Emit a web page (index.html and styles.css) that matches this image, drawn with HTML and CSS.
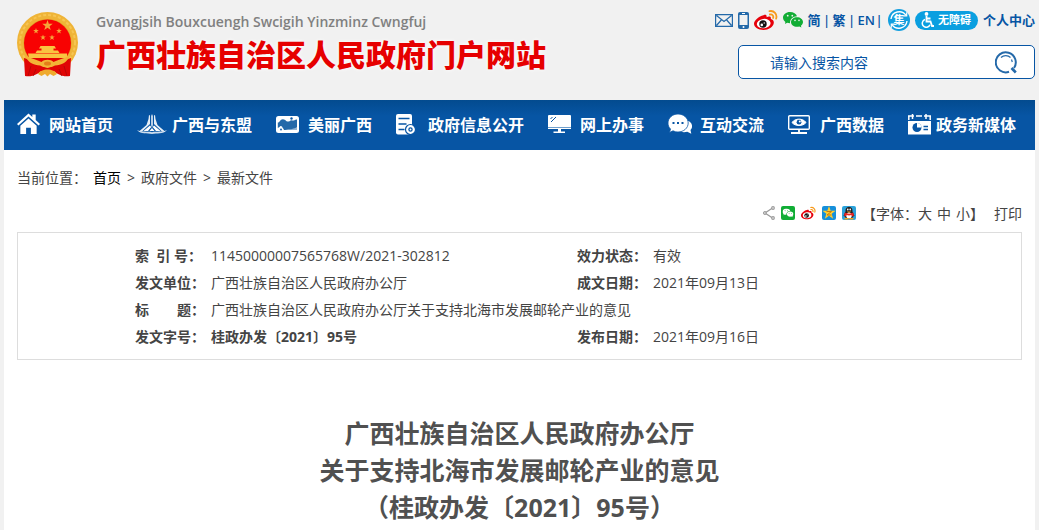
FILE: index.html
```html
<!DOCTYPE html>
<html lang="zh-CN">

<head>
    <meta charset="UTF-8">
    <meta name="viewport" content="width=device-width, initial-scale=1.0">
    <title>广西壮族自治区人民政府门户网站</title>
    <link rel="stylesheet" href="styles.css">
</head>

<body>
    <svg class="defs" width="0" height="0" aria-hidden="true">
        <symbol id="star" viewBox="-10 -10 20 20">
            <path d="M0-10 2.4-3.1 9.5-3.1 3.8 1.2 5.9 8.1 0 4-5.9 8.1-3.8 1.2-9.5-3.1-2.4-3.1Z" />
        </symbol>
        <symbol id="wechat" viewBox="0 0 20 16">
            <path fill-rule="evenodd" d="M7 0C3 0 0 2.5 0 5.6 0 7.400.9 8.9 2.400 9.900L1.900 12 4.200 10.800C5.300 11.100 6 11.200 7 11.200 6.700 7 10 4.300 14 4.200 13.300 1.700 10.500 0 7 0ZM4.700 2.800a.9.9 0 1 1 0 1.800.9.9 0 0 1 0-1.800ZM9.300 2.800a.9.9 0 1 1 0 1.800.9.9 0 0 1 0-1.800Z" />
            <path fill-rule="evenodd" d="M14 5.200c3.300 0 6 2.100 6 4.800 0 1.500-.8 2.800-2.100 3.700l.5 1.900-2.100-1.100c-.7.200-1.500.3-2.300.3-3.300 0-6-2.100-6-4.800s2.700-4.800 6-4.800ZM12 7.600a.8.8 0 1 0 0 1.600.8.8 0 0 0 0-1.600ZM16 7.600a.8.8 0 1 0 0 1.600.8.8 0 0 0 0-1.600Z" />
        </symbol>
        <symbol id="weibo" viewBox="0 0 24 20">
            <path fill="#e6000a" d="M9.500 5.200C11.500 4.200 13 4.800 12.600 7.200 15 6.200 17.400 6.300 16.800 9 19 9.700 20 11 19.800 13 19.300 17 14.500 20 9.500 20 4.500 20 0 17.500 0 13.800 0 10.500 4.800 6.300 9.500 5.200Z" />
            <ellipse cx="9.700" cy="13.600" rx="6.900" ry="4.700" fill="#fff" transform="rotate(-8 9.700 13.600)" />
            <circle cx="9" cy="14" r="3.700" fill="#111" />
            <circle cx="7.800" cy="14.900" r="1.300" fill="#fff" />
            <circle cx="10.200" cy="13" r=".7" fill="#fff" />
            <path fill="none" stroke="#f79a1c" stroke-width="1.800" stroke-linecap="round" d="M15.500 1.200C19.900.2 23.600 4.200 22.100 8.700M15.900 4.500C18.300 4 19.800 5.900 19.100 8" />
        </symbol>
    </svg>

    <header class="header">
        <a class="logo" href="#">
            <svg class="emblem" viewBox="0 0 61 65" role="img" aria-label="国徽">
                <circle cx="30.500" cy="30.500" r="30.500" fill="#efb437" />
                <circle cx="30.500" cy="30.500" r="27.500" fill="none" stroke="#f7c552" stroke-width="2" stroke-dasharray="3 2" />
                <circle cx="30.500" cy="31" r="24" fill="#e09a26" />
                <circle cx="30.500" cy="31" r="23.500" fill="#f80202" />
                <g fill="#f5a63a">
                    <use href="#star" x="25" y="8" width="11" height="11" />
                    <use href="#star" x="16" y="16" width="6" height="6" />
                    <use href="#star" x="39" y="16" width="6" height="6" />
                    <use href="#star" x="23" y="22.500" width="6" height="6" />
                    <use href="#star" x="32" y="22.500" width="6" height="6" />
                </g>
                <path d="M23.500 34h14l1.500 2.500h-17ZM24.500 36.500h12V38.500h-12ZM20 38.500h21l1.500 2.500H18.500ZM11 41.500h39v4.500H12Z" fill="#f9c440" />
                <path d="M12 46h37l-5 8H17Z" fill="#e60000" />
                <path d="M7 46 13 48 22 53 30.500 56 39 53 48 48 54 46 53 64C46 65.500 40 62 37 59H24C21 62 15 65.500 8 64Z" fill="#e00505" />
                <path d="M8 43C14 47 20 47.500 24.500 50 27 47 34 47 36.500 50 41 47.500 47 47 53 43 51 50 44 53.500 38 53.500 34 56 27 56 23 53.500 17 53.500 10 50 8 43Z" fill="#f3b436" />
                <ellipse cx="30.500" cy="51.500" rx="3.500" ry="2" fill="#e47d18" />
                <path d="M21 62C24 56 37 56 40 62L36.500 64 33 62 30.500 64.500 28 62 24.500 64Z" fill="#efaa2d" />
                <path d="M14 54l-3 10M47 54l3 10M19 57l-3 7M42 57l3 7" fill="none" stroke="#b90707" />
            </svg>
            <span class="logo-text">
                <span class="logo-sub">Gvangjsih Bouxcuengh Swcigih Yinzminz Cwngfuj</span>
                <span class="logo-title">广西壮族自治区人民政府门户网站</span>
            </span>
        </a>

        <div class="tools">
            <div class="tool-links">
                <a href="#" aria-label="邮箱">
                    <svg width="18" height="13" viewBox="0 0 18 13" fill="none" stroke="#2469a9" stroke-width="1.200">
                        <path d="M.6.6H17.400V12.400H.6ZM1.500 1.500 9 7.500 16.500 1.500M1.500 11.500 6.300 6M16.500 11.500 11.700 6" />
                    </svg>
                </a>
                <a href="#" aria-label="手机版">
                    <svg width="11" height="17" viewBox="0 0 11 17">
                        <rect width="11" height="17" rx="2" fill="#2469a9" />
                        <path d="M1.500 3h8v10h-8Z" fill="#f1f1f1" />
                        <path d="M4 1.500h3" stroke="#fff" />
                        <circle cx="5.500" cy="15" r="1" fill="#fff" />
                    </svg>
                </a>
                <a href="#" aria-label="微博"><svg width="24" height="20"><use href="#weibo" /></svg></a>
                <a href="#" aria-label="微信"><svg width="20" height="16" fill="#12ad35"><use href="#wechat" /></svg></a>
                <span class="langs">
                    <a href="#">简</a><i>|</i><a href="#">繁</a><i>|</i><a href="#">EN</a><i>|</i>
                </span>
                <a href="#" class="jyh">
                    <svg viewBox="0 0 22 22" fill="none" stroke="#fff" aria-hidden="true">
                        <circle cx="11" cy="11" r="11" fill="#139fdf" stroke="none" />
                        <path d="M3 10A8.300 8.300 0 0 1 18 6.300M19 12A8.300 8.300 0 0 1 4 15.700" stroke-width="1.400" />
                        <path d="M18.700 3.300v3.500h-3.500M3.300 18.700v-3.500h3.500" stroke-width="1.200" />
                    </svg>
                    <span>集</span>
                </a>
                <a href="#" class="pill">
                    <svg width="13" height="16" viewBox="0 0 13 16" fill="none" stroke="#fff" stroke-width="1.800" aria-hidden="true">
                        <circle cx="5.500" cy="1.900" r="1.900" fill="#fff" stroke="none" />
                        <path d="M5.500 4v5.500h4l1.500 4.500h2M6 6.500h3.500" />
                        <path d="M4 7.500a4 4 0 1 0 5 5.300" stroke-width="1.500" />
                    </svg>
                    无障碍
                </a>
                <a href="#">个人中心</a>
            </div>
            <form class="search">
                <input type="text" placeholder="请输入搜索内容" aria-label="请输入搜索内容">
                <button type="button" aria-label="搜索">
                    <svg width="22" height="23" viewBox="0 0 22 23" fill="none" stroke="#2469a9">
                        <path d="M14 20.800A10 10 0 1 1 19 17" stroke-width="2" />
                        <path d="M16.500 17 20.800 21.500" stroke-width="2.600" />
                        <path d="M6 6.500C8.500 4 13 4 15.500 6.500M16.500 8.500 17.300 11" stroke-width="1.200" />
                    </svg>
                </button>
            </form>
        </div>
    </header>

    <nav class="nav">
        <a href="#">
            <svg viewBox="0 0 24 22" width="23" height="22" fill="#fff">
                <path d="M12 0 16 3.600V1.200h3.500v5.600L24 11l-1.500 1.500L12 3.200 1.500 12.500 0 11Z" />
                <path d="M12 5.200 20.500 12.700V21.500H14.500V15h-5v6.500H3.500V12.700Z" />
            </svg>
            网站首页
        </a>
        <a href="#" class="wide">
            <svg viewBox="0 0 30 20" width="30" height="20" fill="#fff">
                <path d="M12 1 13 1.500V10L5 17.500H2L9.500 11 11.500 5ZM14.200 2l.8-2 .8 2v9l-.8 3-.8-3ZM18 1 17 1.500V10l8 7.500H28L20.500 11 18.500 5Z" opacity=".9" />
                <path d="M13 11.500 14.300 13 11 17H6.500ZM17 11.500 15.700 13 19 17h4.500ZM15 14l2.500 3h-5Z" />
                <path d="M0 16C5 18.500 10 17 15 18.200 20 17 25 18.500 30 16 26 20.500 20 19 15 20 10 19 4 20.500 0 16Z" opacity=".8" />
            </svg>
            广西与东盟
        </a>
        <a href="#">
            <svg viewBox="0 0 23 17" width="23" height="17">
                <rect width="23" height="17" rx="2.500" fill="#fff" />
                <path d="M1.800 12V6.500C4 6.500 4 3 7 3.200S10 6 12.500 5.500 14 3.500 16 4.500C19 5 19 3 21 3.500V14H8C7.500 12.500 6.500 12 6 10.500 5 9.500 4 10 3.500 11Z" fill="#2469a9" />
                <path d="M9 14C12 12.500 14 13.500 16 13S19.500 12 21 11v3Z" fill="#fff" opacity=".5" />
                <circle cx="15.500" cy="2.500" r="1.200" fill="#0755a4" />
                <circle cx="5" cy="13.500" r=".9" fill="#0755a4" />
            </svg>
            美丽广西
        </a>
        <a href="#">
            <svg viewBox="0 0 20 21" width="20" height="21">
                <path d="M2 0H14a2 2 0 0 1 2 2V20.500H2a2 2 0 0 1-2-2V2a2 2 0 0 1 2-2Z" fill="#fff" />
                <path d="M2.500 4.500h11M2.500 10h8M2.500 15.500h6" stroke="#0755a4" stroke-width="1.600" />
                <circle cx="14.500" cy="15.500" r="5" fill="#fff" stroke="#0755a4" stroke-width="1.200" />
                <circle cx="14.500" cy="15.500" r="1.600" fill="none" stroke="#0755a4" stroke-width="1.300" />
            </svg>
            政府信息公开
        </a>
        <a href="#">
            <svg viewBox="0 0 23 18" width="23" height="18">
                <path d="M1 0H22a1 1 0 0 1 1 1V14H0V1A1 1 0 0 1 1 0ZM10 14h3v2.500h4V18H5.500v-1.500H10Z" fill="#fff" />
                <path d="M0 12.500h23" stroke="#6f9fcd" />
                <path d="M2.500 4 4.500 2M3 7 8 2" stroke="#0755a4" />
            </svg>
            网上办事
        </a>
        <a href="#">
            <svg viewBox="0 0 24 20" width="24" height="20">
                <path d="M19 6.500C25 8 25 14 22.500 16l.8 3.700-4-2C14 19 12 17 10 16Z" fill="#fff" />
                <path d="M10 0C15.700 0 20.200 4 20.200 9S15.700 18 10 18c-2 0-3.500-.4-5-1.200L1.500 18.500 2.500 15C.8 13.400 0 11.400 0 9 0 4 4.300 0 10 0Z" fill="#fff" stroke="#0755a4" stroke-width=".8" />
                <path d="M4.500 9h2M9 9h2M13.500 9h2" stroke="#0755a4" stroke-width="2" />
            </svg>
            互动交流
        </a>
        <a href="#">
            <svg viewBox="0 0 22 19" width="22" height="19" fill="none" stroke="#fff">
                <rect x=".7" y=".7" width="20.600" height="13.600" rx="1" stroke-width="1.400" />
                <path d="M4 7.500C7 3 15 3 18 7.500 15 11.500 7 11.500 4 7.500Z" fill="#fff" />
                <circle cx="11" cy="7.200" r="2.400" fill="#0755a4" stroke="none" />
                <circle cx="11.800" cy="6.400" r="1" fill="#fff" stroke="none" />
                <path d="M11 14v3M3 18h16" stroke-width="1.800" />
            </svg>
            广西数据
        </a>
        <a href="#" class="narrow">
            <svg viewBox="0 0 23 21" width="23" height="21">
                <path d="M0 2H2M8 2h6M20 2h3M.8 2v4M22.200 2v4M4.500 0v5M18 0v5M2 2h4M16 2h4" fill="none" stroke="#fff" stroke-width="1.500" />
                <path d="M0 7H23V20.500H0Z" fill="#fff" />
                <circle cx="9" cy="13.500" r="4.500" fill="#0755a4" />
                <path d="M9 13.500V9a4.500 4.500 0 0 1 4.500 4.500Z" fill="#fff" />
                <path d="M15.500 12.500h4.500M15.500 15.500h4.500" stroke="#0755a4" stroke-width="1.300" />
            </svg>
            政务新媒体
        </a>
    </nav>

    <main class="main">
        <div class="crumbs">
            <span>当前位置：</span>
            <a href="#" class="home">首页</a>
            <span>&gt;</span>
            <a href="#">政府文件</a>
            <span>&gt;</span>
            <a href="#">最新文件</a>
        </div>

        <div class="share">
            <a href="#" aria-label="分享">
                <svg width="12" height="14" viewBox="0 0 12 14" fill="none" stroke="#999" stroke-width="1.200">
                    <path d="M9.500 2 2 7l7.500 5" />
                    <circle cx="10" cy="2" r="1.300" fill="#fff" />
                    <circle cx="1.900" cy="7" r="1.300" fill="#fff" />
                    <circle cx="10" cy="12" r="1.300" fill="#fff" />
                </svg>
            </a>
            <a href="#" aria-label="微信">
                <svg width="14" height="14" viewBox="0 0 14 14">
                    <rect width="14" height="14" rx="2" fill="#10ad35" />
                    <use href="#wechat" x="1.500" y="2.500" width="11" height="9" fill="#fff" />
                </svg>
            </a>
            <a href="#" aria-label="微博"><svg width="15" height="14"><use href="#weibo" /></svg></a>
            <a href="#" aria-label="QQ空间">
                <svg width="14" height="14" viewBox="0 0 14 14">
                    <rect width="14" height="14" rx="2" fill="#168fda" />
                    <use href="#star" x="0" y="0" width="14" height="14" fill="#ffce2e" />
                    <path d="M4.500 5.500h5L5 9h4.500" fill="none" stroke="#c47b10" />
                </svg>
            </a>
            <a href="#" aria-label="QQ">
                <svg width="14" height="14" viewBox="0 0 14 14">
                    <rect width="14" height="14" rx="2" fill="#2ba2da" />
                    <path d="M7 .8C9.700.8 10.800 3 10.500 5.500L12.500 10 11 10.500 10 12.500H4L3 10.500 1.500 10 3.500 5.500C3.200 3 4.300.8 7 .8Z" fill="#25201f" />
                    <ellipse cx="7" cy="9.500" rx="2.800" ry="3" fill="#fff" />
                    <path d="M2.800 6.500Q7 8.800 11.200 6.500L12 9.500 10 10.500 9.500 9Q7 9.800 4.500 9L4 10.500 2 9.500Z" fill="#e82520" />
                    <ellipse cx="5.800" cy="3.500" rx=".8" ry="1.100" fill="#fff" />
                    <ellipse cx="8.200" cy="3.500" rx=".8" ry="1.100" fill="#fff" />
                    <path d="M4.700 5.500h4.600L7 6.800ZM2.500 12h4v1.500h-4ZM7.500 12h4v1.500h-4Z" fill="#f6a51f" />
                </svg>
            </a>
            <span class="sizes">【字体：<a href="#">大</a><a href="#">中</a><a href="#">小</a>】</span>
            <a href="#">打印</a>
        </div>

        <div class="info">
            <table>
                <colgroup>
                    <col class="col-label">
                    <col class="col-value">
                    <col class="col-label">
                    <col>
                </colgroup>
                <tr>
                    <th>索&nbsp; 引 号：</th>
                    <td>11450000007565768W/2021-302812</td>
                    <th>效力状态：</th>
                    <td>有效</td>
                </tr>
                <tr>
                    <th>发文单位：</th>
                    <td>广西壮族自治区人民政府办公厅</td>
                    <th>成文日期：</th>
                    <td>2021年09月13日</td>
                </tr>
                <tr>
                    <th>标&emsp;&emsp;题：</th>
                    <td colspan="3">广西壮族自治区人民政府办公厅关于支持北海市发展邮轮产业的意见</td>
                </tr>
                <tr>
                    <th>发文字号：</th>
                    <td><b>桂政办发〔2021〕95号</b></td>
                    <th>发布日期：</th>
                    <td>2021年09月16日</td>
                </tr>
            </table>
        </div>

        <h1>广西壮族自治区人民政府办公厅<br>关于支持北海市发展邮轮产业的意见<br>（桂政办发〔2021〕95号）</h1>
    </main>
</body>

</html>
```
FILE: styles.css
```css
* {
    margin: 0;
    padding: 0;
    box-sizing: border-box;
}

body {
    display: flex;
    flex-direction: column;
    min-height: 100vh;
    padding: 0 4px;
    background: #f1f1f1;
    color: #444;
    font-family: "Open Sans", "Noto Sans CJK SC", sans-serif;
    font-size: 14px;
}

a {
    color: inherit;
    text-decoration: none;
}

svg {
    display: block;
    flex: none;
}

.defs {
    position: absolute;
}

/* header */
.header {
    display: flex;
    justify-content: space-between;
    height: 100px;
}

.logo {
    display: flex;
    align-items: flex-start;
    gap: 18px;
    padding: 12px 0 0 13px;
}

.emblem {
    width: 61px;
    height: 65px;
}

.logo-text {
    display: flex;
    flex-direction: column;
    white-space: nowrap;
}

.logo-sub {
    color: #808080;
    font-size: 14px;
    font-weight: 600;
    line-height: 20px;
}

.logo-title {
    color: #e60000;
    font-size: 30px;
    font-weight: 900;
    line-height: 46px;
    text-shadow: 0 0 4px #fff;
}

.tools {
    padding-top: 8px;
}

.tool-links {
    display: flex;
    align-items: center;
    justify-content: flex-end;
    gap: 5px;
    height: 24px;
    color: #0755a4;
    font-size: 13px;
    font-weight: 600;
    line-height: 22px;
    white-space: nowrap;
}

.langs {
    display: flex;
}

.langs i {
    width: 12px;
    font-style: normal;
    text-align: center;
}

.langs i:last-child {
    width: 8px;
}

.jyh {
    display: grid;
    width: 22px;
    height: 22px;
    place-items: center;
    color: #fff;
    font-size: 11px;
}

.jyh svg,
.jyh span {
    grid-area: 1 / 1;
}

.jyh svg {
    width: 22px;
    height: 22px;
}

.pill {
    display: flex;
    align-items: center;
    gap: 4px;
    height: 19px;
    padding: 0 7px 0 6px;
    border-radius: 10px;
    background: #0a9fe0;
    color: #fff;
    font-size: 11px;
    font-weight: 700;
}

.search {
    display: flex;
    align-items: center;
    width: 297px;
    height: 34px;
    margin: 13px 0 0 auto;
    border: 1px solid #0755a4;
    border-radius: 5px;
    background: #fff;
}

.search input {
    flex: 1;
    min-width: 0;
    height: 32px;
    padding-left: 31px;
    border: none;
    outline: none;
    background: none;
    color: #0755a4;
    font: inherit;
}

.search input::placeholder {
    color: #0755a4;
    opacity: 1;
}

.search button {
    padding: 0 17px;
    border: none;
    background: none;
    cursor: pointer;
}

/* nav */
.nav {
    display: flex;
    justify-content: space-between;
    height: 50px;
    padding: 0 19px 2px 13px;
    background: linear-gradient(#034b8f, #0755a4 16px);
    color: #fff;
    font-size: 16px;
    font-weight: 700;
    white-space: nowrap;
}

.nav a {
    display: grid;
    grid-template-columns: 32px auto;
    align-items: center;
}

.nav .wide {
    grid-template-columns: 35px auto;
}

.nav .narrow {
    grid-template-columns: 28px auto;
}

/* content */
.main {
    flex: 1;
    padding: 16px 13px 0;
    background: #fff;
}

.crumbs {
    display: flex;
    gap: 6px;
    line-height: 24px;
}

.crumbs .home {
    color: #000;
}

.share {
    display: flex;
    align-items: center;
    justify-content: flex-end;
    gap: 6px;
    height: 24px;
    margin: 11px 0 7px;
}

.sizes {
    display: flex;
    margin-right: 4px;
}

.sizes a + a {
    margin-left: 5px;
}

.info {
    padding: 9px 117px;
    border: 1px solid #ddd;
}

.info table {
    width: 100%;
    border-collapse: collapse;
    table-layout: fixed;
    line-height: 27px;
    white-space: nowrap;
}

.info th {
    font-weight: 700;
    text-align: left;
}

.info .col-label {
    width: 76px;
}

.info .col-value {
    width: 366px;
}

h1 {
    margin-top: 55px;
    color: #505050;
    font-size: 25px;
    font-weight: 700;
    line-height: 37px;
    text-align: center;
}
```
